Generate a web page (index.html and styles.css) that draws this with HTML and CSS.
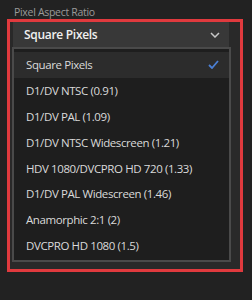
FILE: index.html
```html
<!DOCTYPE html>
<html lang="en">

<head>
    <meta charset="UTF-8">
    <meta name="viewport" content="width=device-width, initial-scale=1.0">
    <title>Pixel Aspect Ratio</title>
    <link rel="stylesheet" href="styles.css">
</head>

<body>

    <div class="field">
        <div class="field-label">Pixel Aspect Ratio</div>
        <div class="frame">
            <div class="select">
                <span>Square Pixels</span>
                <svg class="chevron" width="10" height="6" viewBox="0 0 10 6">
                    <path d="M1 1 L5 5 L9 1" fill="none" stroke="#c8c8c8" stroke-width="1.5" />
                </svg>
            </div>
            <ul class="menu">
                <li class="item selected">
                    <span>Square Pixels</span>
                    <svg class="check" width="11" height="9" viewBox="0 0 11 9">
                        <path d="M1 5 L4 8 L10 1" fill="none" stroke="#4b7fd4" stroke-width="1.8" />
                    </svg>
                </li>
                <li class="item">D1/DV NTSC (0.91)</li>
                <li class="item">D1/DV PAL (1.09)</li>
                <li class="item">D1/DV NTSC Widescreen (1.21)</li>
                <li class="item">HDV 1080/DVCPRO HD 720 (1.33)</li>
                <li class="item">D1/DV PAL Widescreen (1.46)</li>
                <li class="item">Anamorphic 2:1 (2)</li>
                <li class="item">DVCPRO HD 1080 (1.5)</li>
            </ul>
        </div>
    </div>

</body>

</html>
```

FILE: styles.css
```css
body {
    margin: 0;
    background: #222222;
    font-family: "Open Sans", "Noto Sans", sans-serif;
    height: 300px;
    overflow: hidden;
}

.field {
    padding-top: 6px;
}

.field-label {
    padding-left: 14px;
    font-size: 10.5px;
    line-height: 13px;
    letter-spacing: -0.3px;
    color: #9a9a9a;
}

/* 赤い枠 */
.frame {
    box-sizing: border-box;
    width: 236px;
    height: 253px;
    margin-left: 7px;
    border: 3px solid #e03a3e;
    background: #292929;
}

.select {
    box-sizing: border-box;
    display: flex;
    align-items: center;
    justify-content: space-between;
    width: 216px;
    height: 25px;
    margin-left: 3px;
    padding: 0 9px 0 11px;
    background: #383838;
    color: #f0f0f0;
    font-size: 12px;
    font-weight: 600;
    letter-spacing: -0.3px;
}

.menu {
    box-sizing: border-box;
    list-style: none;
    width: 219px;
    height: 215px;
    margin: 0 0 0 2px;
    padding: 3px 0 0;
    border: 2px solid #4a4a4a;
    background: #1e1e1e;
}

.item {
    box-sizing: border-box;
    display: flex;
    align-items: center;
    justify-content: space-between;
    height: 25.8px;
    padding: 0 10px 0 12px;
    color: #dadada;
    font-size: 11.5px;
    letter-spacing: -0.4px;
    white-space: nowrap;
}

.selected {
    background: #2c2c2c;
}
```
